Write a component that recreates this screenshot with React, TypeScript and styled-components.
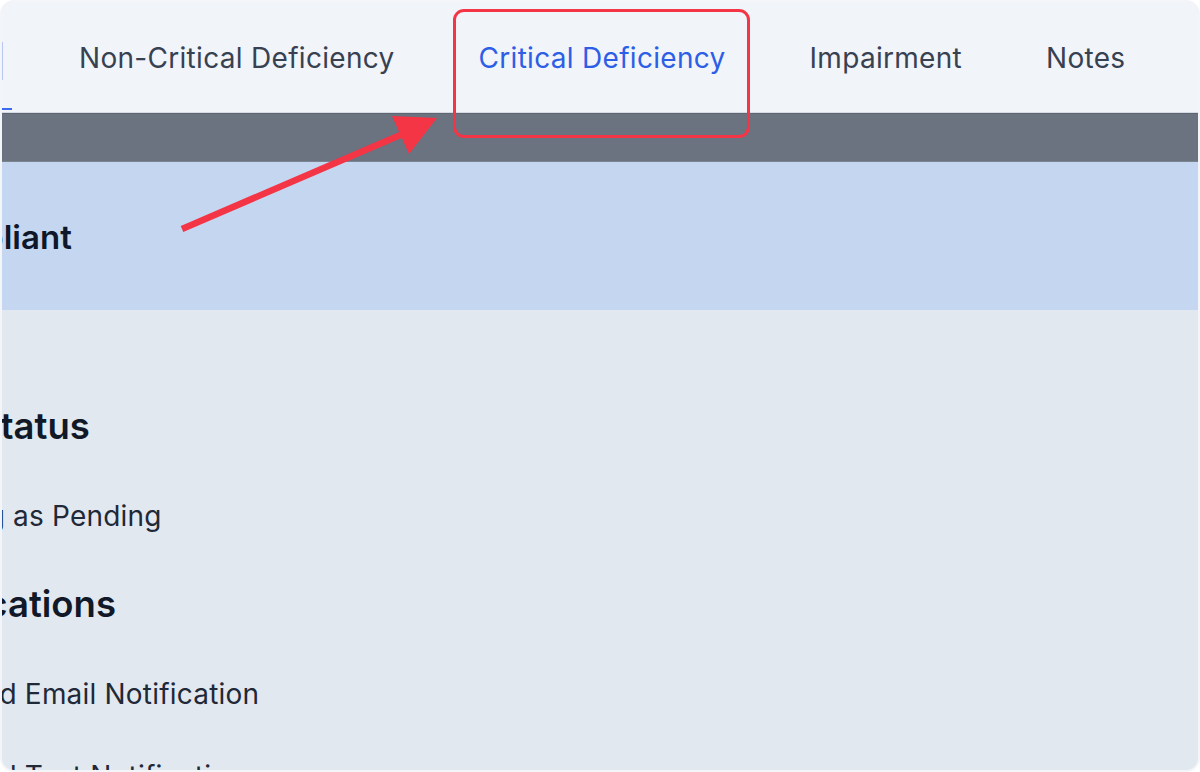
import React from "react";
import styled, { createGlobalStyle } from "styled-components";

const GlobalStyle = createGlobalStyle`
  html, body { margin: 0; padding: 0; background: #ffffff; }
  body { font-family: Inter, "Noto Sans", "Liberation Sans", sans-serif; }
  * { box-sizing: border-box; }
`;

const Frame = styled.div`
  position: relative;
  width: 1200px;
  height: 772px;
  border: 2px solid #f4f5f8;
  border-radius: 14px;
  overflow: hidden;
  background: #e2e8f0;
  display: flex;
  flex-direction: column;
`;

const TabBar = styled.div`
  height: 111px;
  flex: 0 0 auto;
  background: #f1f4f9;
  border-bottom: 1px solid #d6dbe3;
  display: flex;
  align-items: stretch;
`;

const Stub = styled.div`
  position: relative;
  width: 35px;
  flex: 0 0 auto;
  &::before {
    content: "";
    position: absolute;
    left: 0;
    top: 40px;
    width: 1px;
    height: 38px;
    background: #b8c8f2;
  }
  &::after {
    content: "";
    position: absolute;
    left: 0;
    bottom: 2px;
    width: 10px;
    height: 2px;
    background: #3b6cf0;
  }
`;

const Tab = styled.div<{ $active?: boolean }>`
  display: flex;
  align-items: center;
  padding: 1px 42px 0;
  font-size: 28px;
  letter-spacing: 0.3px;
  font-weight: 400;
  color: ${(p) => (p.$active ? "#2d5ee6" : "#374151")};
  white-space: nowrap;
`;

const DarkBar = styled.div`
  height: 49px;
  flex: 0 0 auto;
  background: #6b7280;
  border-top: 1px solid #5f6673;
  border-bottom: 1px solid #7b8290;
`;

const Banner = styled.div`
  height: 148px;
  flex: 0 0 auto;
  background: #c5d6f0;
  display: flex;
  align-items: center;
  padding-top: 2px;
`;

const Column = styled.div<{ $shift: number }>`
  margin-left: ${(p) => p.$shift}px;
  display: flex;
  flex-direction: column;
`;

const BannerTitle = styled.h1`
  margin: 0;
  font-size: 33px;
  line-height: 40px;
  font-weight: 600;
  color: #0f172a;
  white-space: nowrap;
`;

const Content = styled.div`
  flex: 1 1 auto;
  padding-top: 92px;
  display: flex;
`;

const Section = styled.section`
  display: flex;
  flex-direction: column;
  gap: 46px;
  margin-bottom: 46px;
`;

const SectionTitle = styled.h2`
  margin: 0 0 2px;
  font-size: 36.5px;
  line-height: 48px;
  font-weight: 600;
  color: #111827;
  white-space: nowrap;
`;

const CheckRow = styled.label`
  display: flex;
  align-items: center;
  gap: 20px;
  padding-left: 14px;
  height: 36px;
  font-size: 28px;
  letter-spacing: 0.2px;
  color: #1f2937;
  white-space: nowrap;
`;

const Box = styled.span`
  width: 24px;
  height: 24px;
  border: 2px solid #6b7280;
  border-radius: 4px;
  background: #ffffff;
  flex: 0 0 auto;
`;

const Overlay = styled.div`
  position: absolute;
  inset: 0;
  pointer-events: none;
`;

const Highlight = styled.div`
  position: absolute;
  left: 451px;
  top: 7px;
  width: 297px;
  height: 129px;
  border: 3px solid #f43545;
  border-radius: 11px;
`;

const ArrowSvg = styled.svg`
  position: absolute;
  left: -2px;
  top: -2px;
`;

export default function App() {
  return (
    <>
      <GlobalStyle />
      <Frame>
        <TabBar>
          <Stub />
          <Tab>Non-Critical Deficiency</Tab>
          <Tab $active>Critical Deficiency</Tab>
          <Tab>Impairment</Tab>
          <Tab>Notes</Tab>
        </TabBar>
        <DarkBar />
        <Banner>
          <Column $shift={-93}>
            <BannerTitle>Compliant</BannerTitle>
          </Column>
        </Banner>
        <Content>
          <Column $shift={-112}>
            <Section>
              <SectionTitle>Item Status</SectionTitle>
              <CheckRow>
                <Box />
                Flag as Pending
              </CheckRow>
            </Section>
            <Section>
              <SectionTitle>Notifications</SectionTitle>
              <CheckRow>
                <Box />
                Send Email Notification
              </CheckRow>
              <CheckRow>
                <Box />
                Send Text Notification
              </CheckRow>
            </Section>
          </Column>
        </Content>
        <Overlay>
          <Highlight />
          <ArrowSvg width="1200" height="772" viewBox="0 0 1200 772">
            <line x1="182" y1="229" x2="405" y2="133" stroke="#f43545" strokeWidth="6.5" />
            <polygon points="437,118 392,116 409,154" fill="#f43545" />
          </ArrowSvg>
        </Overlay>
      </Frame>
    </>
  );
}
